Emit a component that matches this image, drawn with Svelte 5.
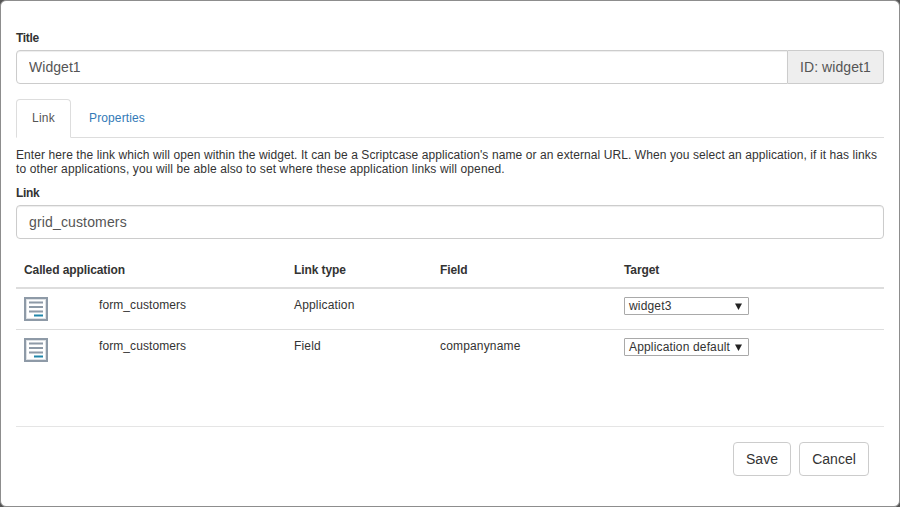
<script>
  let tab = $state('Link');
  let title = $state('Widget1');
  let link = $state('grid_customers');
  const tabs = ['Link', 'Properties'];
  const rows = [
    { app: 'form_customers', type: 'Application', field: '', target: 'widget3' },
    { app: 'form_customers', type: 'Field', field: 'companyname', target: 'Application default' }
  ];
</script>

<div class="modal">
  <label for="title">Title</label>
  <div class="group">
    <input id="title" bind:value={title} />
    <span class="addon">ID: widget1</span>
  </div>

  <nav class="tabs">
    {#each tabs as name}
      <button class="tab" class:active={tab === name} onclick={() => (tab = name)}>{name}</button>
    {/each}
  </nav>

  <p><span class="first">Enter here the link which will open within the widget. It can be a Scriptcase application's name or an external URL. When you select an application, if it has links</span><br /><span class="second">to other applications, you will be able also to set where these application links will opened.</span></p>

  <label for="link">Link</label>
  <div class="group">
    <input id="link" class="full" bind:value={link} />
  </div>

  <div class="table">
    <div class="row head">
      <span>Called application</span>
      <span>Link type</span>
      <span>Field</span>
      <span>Target</span>
    </div>
    {#each rows as row}
      <div class="row">
        <div class="app">
          <svg width="24" height="24" viewBox="0 0 24 24" shape-rendering="crispEdges">
            <rect width="24" height="24" fill="#8e9aa7" />
            <rect x="2" y="2" width="20" height="20" fill="#dde1e5" />
            <rect x="3" y="3" width="18" height="18" fill="#fff" />
            <g fill="#c5cbd2">
              <rect x="5" y="4" width="14" height="3" />
              <rect x="5" y="9" width="14" height="2" />
              <rect x="5" y="13" width="14" height="3" />
            </g>
            <g fill="#8e9aa7">
              <rect x="5" y="5" width="14" height="1" />
              <rect x="5" y="9" width="14" height="2" />
              <rect x="5" y="14" width="14" height="1" />
            </g>
            <rect x="10" y="17" width="9" height="3" fill="#8cc3d6" />
            <rect x="10" y="18" width="9" height="1" fill="#2385a8" />
          </svg>
          <span>{row.app}</span>
        </div>
        <span class="type">{row.type}</span>
        <span class="type">{row.field}</span>
        <div class="select">
          <span>{row.target}</span>
          <svg width="7" height="7" viewBox="0 0 7 7"><path d="M0 .5h7L3.5 7z" fill="#222" /></svg>
        </div>
      </div>
    {/each}
  </div>

  <footer>
    <button class="btn save">Save</button>
    <button class="btn cancel">Cancel</button>
  </footer>
</div>

<style>
  :global(body) { background: #555; }
  * { box-sizing: border-box; }
  .modal {
    width: 900px;
    height: 507px;
    padding: 27px 15px 0;
    background: #fff;
    border: 1px solid #8d8d8d;
    border-radius: 6px;
    font: 12px/17px "Liberation Sans", Arial, sans-serif;
    color: #333;
    overflow: hidden;
  }
  label {
    display: block;
    height: 22px;
    padding-top: 2px;
    font-weight: bold;
    letter-spacing: -0.3px;
  }
  .group { display: flex; height: 34px; }
  input {
    flex: 1;
    min-width: 0;
    height: 34px;
    padding: 6px 12px;
    border: 1px solid #ccc;
    border-radius: 4px 0 0 4px;
    box-shadow: inset 0 1px 1px rgba(0, 0, 0, 0.075);
    font: 14px "Liberation Sans", Arial, sans-serif;
    letter-spacing: 0.05px;
    color: #555;
    outline: none;
  }
  input.full { border-radius: 4px; letter-spacing: 0.15px; }
  .addon {
    width: 96px;
    padding: 8px 0 0 12px;
    border: 1px solid #ccc;
    border-left: 0;
    border-radius: 0 4px 4px 0;
    background: #eee;
    color: #555;
    font-size: 14px;
    line-height: 16px;
    letter-spacing: 0.08px;
  }
  .tabs {
    display: flex;
    gap: 2px;
    height: 39px;
    margin-top: 15px;
    border-bottom: 1px solid #ddd;
  }
  .tab {
    height: 39px;
    padding: 0 15px;
    border: 1px solid transparent;
    border-radius: 4px 4px 0 0;
    background: none;
    font: inherit;
    letter-spacing: 0.12px;
    color: #337ab7;
  }
  .tab.active {
    border-color: #ddd #ddd #fff;
    background: #fff;
    letter-spacing: 0.25px;
    color: #555;
  }
  p { margin: 10px 0 7px; line-height: 14px; white-space: nowrap; }
  .first { letter-spacing: 0.087px; }
  .second { letter-spacing: 0.118px; }
  .table { margin-top: 14px; }
  .row {
    display: grid;
    grid-template-columns: 270px 146px 184px 1fr;
    height: 41px;
    padding: 8px 8px 0;
    border-bottom: 1px solid #ddd;
    letter-spacing: 0.08px;
  }
  .row:last-child { border-bottom: 0; }
  .row.head {
    height: 36px;
    padding-top: 9px;
    border-bottom: 2px solid #ddd;
    font-weight: bold;
    letter-spacing: -0.1px;
  }
  .type { letter-spacing: 0.16px; }
  .app { display: flex; gap: 51px; }
  .select {
    display: flex;
    justify-content: space-between;
    align-items: center;
    width: 125px;
    height: 18px;
    padding: 0 6px 0 4px;
    border: 1px solid #a9a9a9;
    border-radius: 1px;
    letter-spacing: 0.16px;
    white-space: nowrap;
  }
  footer {
    display: flex;
    justify-content: flex-end;
    gap: 8px;
    margin-top: 55px;
    padding: 15px 15px 0;
    border-top: 1px solid #e5e5e5;
  }
  .btn {
    height: 34px;
    padding: 0;
    border: 1px solid #ccc;
    border-radius: 4px;
    background: #fff;
    font: 14px/20px "Liberation Sans", Arial, sans-serif;
    color: #333;
  }
  .save { width: 58px; }
  .cancel { width: 70px; }
</style>
